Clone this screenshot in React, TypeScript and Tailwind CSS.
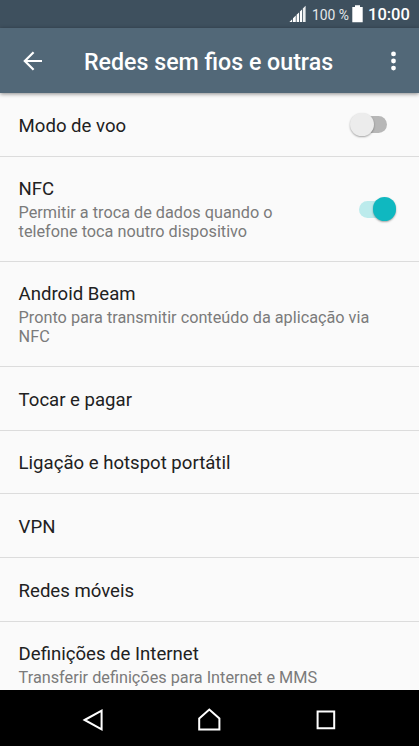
type Item = {
  title: string
  summary?: string
  toggle?: 'on' | 'off'
  height: string
}

const items: Item[] = [
  { title: 'Modo de voo', toggle: 'off', height: 'h-16' },
  {
    title: 'NFC',
    summary: 'Permitir a troca de dados quando o telefone toca noutro dispositivo',
    toggle: 'on',
    height: 'h-[105px]',
  },
  {
    title: 'Android Beam',
    summary: 'Pronto para transmitir conteúdo da aplicação via NFC',
    height: 'h-[105px]',
  },
  { title: 'Tocar e pagar', height: 'h-16' },
  { title: 'Ligação e hotspot portátil', height: 'h-[63px]' },
  { title: 'VPN', height: 'h-16' },
  { title: 'Redes móveis', height: 'h-16' },
  {
    title: 'Definições de Internet',
    summary: 'Transferir definições para Internet e MMS',
    height: 'h-[86px]',
  },
]

function StatusBar() {
  return (
    <div className="flex h-7 shrink-0 items-center justify-end bg-[#3e505e] pr-[10px] text-white">
      <svg width="18" height="18" viewBox="0 0 18 18" fill="#fff">
        <path d="M0.4 17 3.2 14.2V17ZM4 13.2 6.8 10.6V17H4ZM7.6 9.8 10 7.4V17H7.6ZM10.9 6.6 13 4.4V17H10.9Z" />
        <path d="M13.8 3.4 16.6 0.8V17H13.8Z" opacity="0.9" />
      </svg>
      <span className="ml-[5px] w-[36px] pt-px text-[13.9px] leading-7 whitespace-nowrap text-[#e4e8eb]">100 %</span>
      <svg className="ml-1 mr-px" width="11" height="18" viewBox="0 0 11 18" fill="#fff">
        <path d="M3 0.3H8V2H10.7V17.2H0.3V2H3Z" />
      </svg>
      <span className="ml-1 w-[41px] pt-px text-[16.5px] leading-7 font-medium">10:00</span>
    </div>
  )
}

function Toolbar() {
  return (
    <header className="relative z-10 flex h-[65px] shrink-0 items-center bg-[#526878] text-white shadow-[0_1px_4px_rgba(0,0,0,0.45)]">
      <svg className="ml-[23px]" width="20" height="20" viewBox="0 0 20 20" fill="none" stroke="#fff" strokeWidth="2.2">
        <path d="M19 10H2M10.6 1.2 1.8 10 10.6 18.8" />
      </svg>
      <h1 className="ml-[41px] flex-1 pt-0.5 text-[23.2px] leading-7 font-medium whitespace-nowrap">
        Redes sem fios e outras
      </h1>
      <svg className="mr-[23px]" width="5" height="20" viewBox="0 0 5 20" fill="#fff">
        <circle cx="2.5" cy="2.9" r="2.4" />
        <circle cx="2.5" cy="10" r="2.4" />
        <circle cx="2.5" cy="17.1" r="2.4" />
      </svg>
    </header>
  )
}

function Toggle({ on }: { on: boolean }) {
  return (
    <div className={`flex h-6 w-[38px] items-center ${on ? 'mr-[22px]' : 'mr-[31px]'}`}>
      <div className={`flex h-[17px] w-7 items-center rounded-full ${on ? 'justify-end bg-[#bcebec]' : 'ml-[9px] bg-[#b7b7b7]'}`}>
        <div
          className={`size-[23.5px] shrink-0 rounded-full shadow-[0_1px_2px_rgba(0,0,0,0.35)] ${
            on ? '-mr-[9px] bg-[#0fb8c0]' : '-ml-[9px] bg-[#ececec]'
          }`}
        />
      </div>
    </div>
  )
}

export default function App() {
  return (
    <div className="flex h-[746px] w-[419px] flex-col overflow-hidden bg-[#fafafa] font-[Roboto,sans-serif]">
      <StatusBar />
      <Toolbar />

      <main className="min-h-0 flex-1 overflow-hidden">
        {items.map((item) => (
          <div
            key={item.title}
            className={`flex items-center justify-between border-b border-[#dcdcdc] pl-[18.6px] ${item.height}`}
          >
            <div className={item.toggle ? 'w-[290px]' : 'w-[372px]'}>
              <h2 className={`text-[18.58px] leading-[22px] text-[#212121] ${item.summary ? '' : 'pt-0.5'}`}>
                {item.title}
              </h2>
              {item.summary && (
                <p className="mt-[3px] text-[16.25px] leading-[19px] text-[#7b7b7b]">{item.summary}</p>
              )}
            </div>
            {item.toggle && <Toggle on={item.toggle === 'on'} />}
          </div>
        ))}
      </main>

      <nav className="flex h-14 shrink-0 items-center bg-black pt-1">
        <svg className="ml-[82px]" width="22" height="24" viewBox="0 0 22 24" fill="none" stroke="#fff" strokeWidth="2">
          <path d="M2.6 12 19.6 2.7V21.3Z" />
        </svg>
        <svg className="ml-[93px]" width="24" height="24" viewBox="0 0 24 24" fill="none" stroke="#fff" strokeWidth="2">
          <path d="M2.2 10.4 12.3 1.5 22.4 10.4V21.6H2.2Z" />
        </svg>
        <svg className="ml-[95px]" width="20" height="20" viewBox="0 0 20 20" fill="none" stroke="#fff" strokeWidth="2">
          <path d="M1.6 1.6H18.2V18.2H1.6Z" />
        </svg>
      </nav>
    </div>
  )
}
